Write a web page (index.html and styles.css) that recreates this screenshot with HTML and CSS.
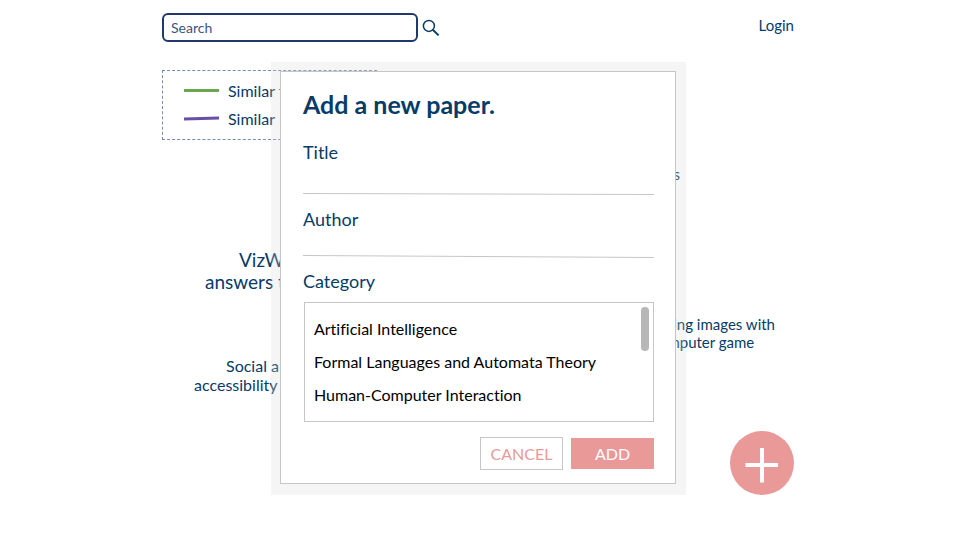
FILE: index.html
```html
<!DOCTYPE html>
<html lang="en">
<head>
<meta charset="utf-8">
<meta name="viewport" content="width=device-width, initial-scale=1">
<title>Add a new paper</title>
<link rel="stylesheet" href="styles.css">
</head>
<body>
<div class="page">
  <header class="topbar">
    <form class="search" role="search">
      <input class="search-input" type="search" placeholder="Search" aria-label="Search">
      <button class="search-button" type="button" aria-label="Search">
        <svg viewBox="0 0 18 18" width="18" height="18" fill="none" stroke="#073b68" stroke-width="1.5">
          <circle cx="6.9" cy="6.9" r="5.5"/>
          <path d="M10.8 10.8 16.6 16.4" stroke-width="2"/>
        </svg>
      </button>
    </form>
    <a class="login" href="#">Login</a>
  </header>

  <ul class="legend">
    <li><svg width="35" height="5" viewBox="0 0 35 5"><path d="M0 2.5H35" stroke="#6aa84f" stroke-width="3"/></svg>Similar to</li>
    <li><svg width="35" height="5" viewBox="0 0 35 5"><path d="M0 3 35 2" stroke="#674ea7" stroke-width="3"/></svg>Similar</li>
  </ul>

  <main class="graph">
    <a class="node node-vizwiz" href="#">VizWiz<br>answers to</a>
    <a class="node node-social" href="#">Social a<br>accessibility</a>
    <a class="node node-links" href="#">links</a>
    <a class="node node-images" href="#">for labeling images with<br>a computer game</a>
  </main>

  <div class="halo">
    <form class="dialog" role="dialog" aria-labelledby="dialog-title">
      <h1 id="dialog-title">Add a new paper.</h1>
      <div class="field">
        <label for="title">Title</label>
        <input id="title" type="text">
        <svg class="rule" viewBox="0 0 352 3" preserveAspectRatio="none"><path d="M0 .5 352 1.5" stroke="#c6c6c6" stroke-width="1"/></svg>
      </div>
      <div class="field author">
        <label for="author">Author</label>
        <input id="author" type="text">
        <svg class="rule" viewBox="0 0 352 3" preserveAspectRatio="none"><path d="M0 .5 352 2.5" stroke="#c6c6c6" stroke-width="1"/></svg>
      </div>
      <div class="field category">
        <label for="category">Category</label>
        <div class="listbox">
          <select id="category" size="3">
            <option>Artificial Intelligence</option>
            <option>Formal Languages and Automata Theory</option>
            <option>Human-Computer Interaction</option>
          </select>
          <span class="thumb"></span>
        </div>
      </div>
      <div class="actions">
        <button class="button cancel" type="button">CANCEL</button>
        <button class="button add" type="button">ADD</button>
      </div>
    </form>
  </div>

  <button class="fab" type="button" aria-label="Add paper">
    <svg viewBox="0 0 64 64" width="64" height="64" fill="none" stroke="#fff" stroke-width="4"><path d="M15.500 34H48M32 17V51.500"/></svg>
  </button>
</div>
</body>
</html>
```
FILE: styles.css
```css
* {
  box-sizing: border-box;
}

body {
  margin: 0;
  background: #fff;
  color: #073b68;
  font-family: Lato, "Open Sans", sans-serif;
  font-size: 16px;
  font-variant-ligatures: none;
}

a {
  color: inherit;
  text-decoration: none;
}

input,
button,
select,
option {
  font: inherit;
  font-variant-ligatures: none;
  border-radius: 0;
}

.page {
  position: relative;
  max-width: 636px;
  min-height: 100vh;
  margin: 0 auto;
  padding-top: 13px;
}

.topbar {
  display: flex;
  align-items: flex-start;
  justify-content: space-between;
  padding-right: 4px;
}

.search {
  display: flex;
  align-items: center;
  gap: 4px;
}

.search-input {
  width: 256px;
  height: 29px;
  padding: 0 7px;
  border: 2px solid #20386b;
  border-radius: 6px;
  background: #fff;
  font-size: 14px;
  appearance: none;
}

.search-input::placeholder {
  color: #3d5580;
  opacity: 1;
}

.search-button {
  display: flex;
  padding: 0;
  border: 0;
  background: none;
}

.login {
  font-size: 15px;
  line-height: 24px;
}

.legend {
  width: 215px;
  margin: 28px 0 0;
  padding: 5px 21px 7px;
  border: 1px dashed #6f90b0;
  list-style: none;
}

.legend li {
  display: flex;
  align-items: center;
  gap: 9px;
  height: 28px;
}

/* Paper nodes sit freely on the graph canvas. */
.node {
  position: absolute;
  white-space: nowrap;
  font-size: 15px;
  line-height: 18px;
}

.node-vizwiz {
  left: 43px;
  top: 249px;
  font-size: 19px;
  line-height: 22px;
  text-indent: 34px;
}

.node-social {
  left: 32px;
  top: 356px;
  font-size: 16px;
  line-height: 19px;
  text-indent: 32px;
}

.node-links {
  right: 118px;
  top: 165px;
}

.node-images {
  right: 23px;
  top: 315px;
  text-align: center;
}

.halo {
  position: absolute;
  top: 62px;
  left: 109px;
  width: 415px;
  padding: 9px 10px 11px 9px;
  background: rgba(217, 217, 217, 0.25);
}

.dialog {
  padding: 18px 21px 13px 22px;
  border: 1px solid #c6c6c6;
  background: #fff;
}

.dialog h1 {
  margin: 0 0 22px;
  font-size: 25px;
  line-height: 28px;
  font-weight: 700;
}

.field label {
  display: block;
  font-size: 18px;
  line-height: 24px;
}

.field input {
  display: block;
  width: 100%;
  height: 29px;
  padding: 0 1px;
  border: 0;
  background: none;
  outline: 0;
}

.author input {
  height: 24px;
}

.rule {
  display: block;
  width: 100%;
  height: 3px;
  margin-bottom: 11px;
}

.listbox {
  position: relative;
  height: 120px;
  margin: 9px 0 0 1px;
  padding: 16px 0 4px;
  border: 1px solid #c6c6c6;
}

.listbox select {
  display: block;
  width: 100%;
  height: 99px;
  padding: 0;
  border: 0;
  background: none;
  color: #000;
  outline: 0;
  overflow: hidden;
  appearance: none;
}

.listbox option {
  height: 33px;
  min-height: 33px;
  padding: 0 9px;
  line-height: 33px;
}

.thumb {
  position: absolute;
  top: 4px;
  right: 4px;
  width: 8px;
  height: 44px;
  border-radius: 4px;
  background: #b7b7b7;
}

.actions {
  display: flex;
  align-items: center;
  justify-content: flex-end;
  gap: 8px;
  margin-top: 15px;
}

.button {
  width: 83px;
  height: 33px;
  padding: 0;
  border: 1px solid #c6c6c6;
}

.cancel {
  background: #fff;
  color: #ea9999;
}

.add {
  height: 31px;
  border-color: #ea9999;
  background: #ea9999;
  color: #fff;
}

.fab {
  position: absolute;
  top: 431px;
  right: 4px;
  display: flex;
  width: 64px;
  height: 64px;
  padding: 0;
  border: 0;
  border-radius: 50%;
  background: #ea9999;
}
```
